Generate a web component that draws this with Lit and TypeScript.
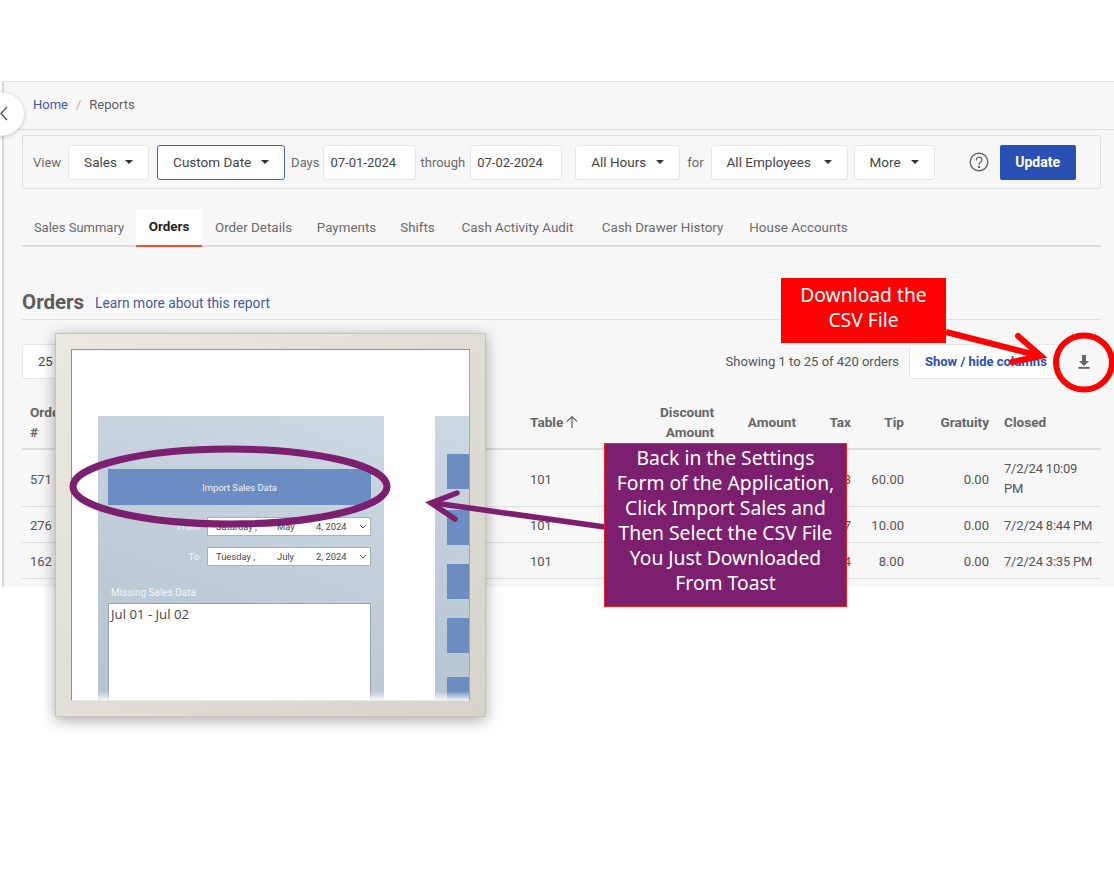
import { LitElement, html, css, svg } from 'lit';
import { customElement } from 'lit/decorators.js';

const caret = html`<span class="caret"></span>`;

const TABS = [
  { label: 'Sales Summary', width: 114 },
  { label: 'Orders', width: 66 },
  { label: 'Order Details', width: 103 },
  { label: 'Payments', width: 83 },
  { label: 'Shifts', width: 59 },
  { label: 'Cash Activity Audit', width: 141 },
  { label: 'Cash Drawer History', width: 149 },
  { label: 'House Accounts', width: 123 },
];

const ROWS = [
  { id: '571', table: '101', tax: '7.83', tip: '60.00', grat: '0.00', closed: '7/2/24 10:09 PM', tall: true },
  { id: '276', table: '101', tax: '2.67', tip: '10.00', grat: '0.00', closed: '7/2/24 8:44 PM', tall: false },
  { id: '162', table: '101', tax: '2.14', tip: '8.00', grat: '0.00', closed: '7/2/24 3:35 PM', tall: false },
];

@customElement('app-root')
export class AppRoot extends LitElement {
  static styles = css`
    :host {
      display: block;
      position: relative;
      width: 1114px;
      height: 883px;
      overflow: hidden;
      background: #fff;
      font-family: Roboto, 'Liberation Sans', sans-serif;
      font-size: 13px;
      color: #5e5e5e;
    }
    .page {
      margin: 81px 0 0 2px;
      height: 506px;
      box-sizing: border-box;
      background: #f7f7f7;
      border-top: 1px solid #e0e0e0;
      border-left: 2px solid #d9d9d9;
      padding-left: 18px;
      padding-right: 13px;
    }
    .crumbs {
      height: 48px;
      margin: 0 -13px 5px -18px;
      padding: 0 0 2px 29px;
      border-bottom: 1px solid #dcdcdc;
      display: flex;
      align-items: center;
      gap: 8px;
      box-sizing: border-box;
    }
    .crumbs a { color: #4256a8; }
    .crumbs .sep { color: #b5b5b5; }
    .filters {
      height: 54px;
      box-sizing: border-box;
      border: 1px solid #dedede;
      border-radius: 2px;
      display: flex;
      align-items: center;
      padding-left: 10px;
    }
    .sel, .date {
      height: 35px;
      box-sizing: border-box;
      background: #fff;
      border: 1px solid #e6e6e6;
      border-radius: 3px;
      display: flex;
      align-items: center;
      color: #444;
    }
    .sel { justify-content: space-between; padding: 0 15px; font-size: 13.5px; }
    .date { padding-left: 6px; }
    .sel.focus { border-color: #4a62b0; }
    .caret {
      width: 0;
      height: 0;
      border-left: 4px solid transparent;
      border-right: 4px solid transparent;
      border-top: 4px solid #333;
    }
    .lbl { color: #6b6b6b; }
    .help {
      width: 20px;
      height: 20px;
      display: block;
      margin-left: 34px;
      margin-right: 11px;
    }
    .update {
      width: 76px;
      height: 35px;
      background: #2a4fb5;
      color: #fff;
      font-weight: 700;
      font-size: 14px;
      border-radius: 2px;
      display: flex;
      align-items: center;
      justify-content: center;
    }
    .tabs {
      margin-top: 20px;
      height: 38px;
      box-sizing: border-box;
      border-bottom: 2px solid #dcdcdc;
      display: flex;
    }
    .tab {
      display: flex;
      align-items: center;
      justify-content: center;
      box-sizing: border-box;
      height: 36px;
      font-size: 13.4px;
      color: #6b6b6b;
    }
    .tab:first-child { font-size: 13px; }
    .tab.on {
      height: 38px;
      padding-bottom: 2px;
      background: #fff;
      color: #222;
      font-weight: 700;
      border-bottom: 2px solid #f0532a;
    }
    .title {
      margin-top: 40px;
      height: 33px;
      border-bottom: 1px solid #dedede;
      display: flex;
      align-items: center;
      gap: 11px;
      box-sizing: border-box;
      padding-bottom: 2px;
    }
    .title h2 {
      margin: 0;
      font-size: 20.5px;
      font-weight: 700;
      color: #5c5c5c;
    }
    .title a {
      color: #4256a8;
      background: #fff;
      border-radius: 9px;
      font-size: 13.8px;
      padding: 1px 0;
      margin-top: 2px;
    }
    .tools {
      margin-top: 24px;
      height: 35px;
      display: flex;
      align-items: center;
    }
    .size {
      width: 80px;
      height: 35px;
      box-sizing: border-box;
      background: #fff;
      border: 1px solid #e6e6e6;
      border-radius: 3px;
      display: flex;
      align-items: center;
      padding-left: 15px;
      color: #444;
    }
    .count { margin-left: auto; color: #555; }
    .cols {
      margin-left: 10px;
      width: 151px;
      height: 35px;
      box-sizing: border-box;
      background: #fff;
      border: 1px solid #e6e6e6;
      border-radius: 3px;
      padding-left: 15px;
      display: flex;
      align-items: center;
      color: #2a4fb5;
      font-weight: 700;
    }
    .dl { width: 16px; height: 16px; margin: 0 9px 0 16px; display: block; }
    .row {
      display: grid;
      grid-template-columns: 500px 130px 70px 82px 55px 53px 85px 104px;
      align-items: center;
      box-sizing: border-box;
      border-bottom: 1px solid #dedede;
      color: #555;
    }
    .row > div { padding: 2px 8px 0; box-sizing: border-box; }
    .row .r { text-align: right; }
    .row .c { padding-left: 7px; padding-right: 8px; line-height: 20px; letter-spacing: -0.2px; }
    .row.head {
      margin-top: 17px;
      height: 54px;
      border-bottom: 2px solid #dcdcdc;
      font-weight: 700;
      font-size: 13.6px;
      color: #666;
      line-height: 20px;
    }
    .row.head > div { padding-top: 0; }
    .row.head .c { letter-spacing: 0; }
    .row.head .tb { display: flex; align-items: center; gap: 2px; }
    .row.tall { height: 57px; }
    .row.low { height: 36px; }

    .frame {
      position: absolute;
      left: 55px;
      top: 333px;
      width: 431px;
      height: 384px;
      box-sizing: border-box;
      padding: 15px;
      background: linear-gradient(135deg, #ebe8e1, #d6d3cb);
      border: 1px solid #c6c3bb;
      box-shadow: 0 3px 14px rgba(0, 0, 0, 0.35);
    }
    .shot {
      position: relative;
      height: 100%;
      box-sizing: border-box;
      background: #fff;
      border: 1px solid #8f8f8f;
      border-bottom-color: #e8e8e8;
      border-right-color: #a8a8a8;
      overflow: hidden;
      padding: 66px 0 0 26px;
      display: flex;
      gap: 51px;
    }
    .shot::after {
      content: '';
      position: absolute;
      left: 0;
      right: 0;
      bottom: 0;
      height: 9px;
      background: linear-gradient(to bottom, rgba(255, 255, 255, 0), rgba(255, 255, 255, 0.85));
    }
    .panel {
      width: 286px;
      flex: none;
      background: linear-gradient(200deg, #ccd8e2, #b6c4d1);
      padding: 53px 13px 0 10px;
      box-sizing: border-box;
      font-size: 9.4px;
      color: #f2f5f8;
    }
    .import {
      height: 36px;
      background: #6c8dc2;
      display: flex;
      align-items: center;
      justify-content: center;
      color: #eef2f8;
      margin-bottom: 12px;
    }
    .pick {
      display: flex;
      align-items: center;
      justify-content: flex-end;
      gap: 8px;
      margin-bottom: 11px;
    }
    .combo {
      width: 164px;
      height: 19px;
      box-sizing: border-box;
      background: #fff;
      border: 1px solid #a5b0bb;
      color: #444;
      display: grid;
      grid-template-columns: 61px 39px 43px 10px;
      align-items: center;
      padding-left: 8px;
    }
    .combo svg { display: block; }
    .missing { margin: 19px 0 0 3px; height: 18px; line-height: 16px; font-size: 10px; }
    .list {
      height: 120px;
      background: #fff;
      border: 1px solid #95a3b0;
      border-bottom: none;
      padding: 1px 2px;
      font-family: 'Open Sans', sans-serif;
      font-size: 13.2px;
      color: #444;
    }
    .side {
      flex: 1;
      background: linear-gradient(200deg, #ccd8e2, #b6c4d1);
      padding: 38px 0 0 12px;
      display: flex;
      flex-direction: column;
      gap: 19px;
    }
    .side i { display: block; height: 35px; background: #6c8dc2; flex: none; }
    .side i:first-child { margin-bottom: 2px; }
    .side i:last-child { margin-top: 5px; }

    .overlay { position: absolute; left: 0; top: 0; pointer-events: none; }
    .callout {
      position: absolute;
      box-sizing: border-box;
      color: #fff;
      font-family: 'Noto Sans', sans-serif;
      text-align: center;
      display: flex;
      align-items: center;
      justify-content: center;
    }
    .callout.red {
      left: 781px;
      top: 278px;
      width: 165px;
      height: 65px;
      padding-bottom: 8px;
      background: #ff0000;
      font-size: 19.3px;
      line-height: 25px;
    }
    .callout.purple {
      left: 604px;
      top: 443px;
      width: 243px;
      height: 164px;
      padding-bottom: 10px;
      background: #7b1f6e;
      border: 1px solid #ff1a1a;
      font-size: 19.3px;
      line-height: 25px;
    }
    .back {
      position: absolute;
      left: -24px;
      top: 92px;
      width: 48px;
      height: 44px;
      border-radius: 50%;
      background: #fff;
      box-shadow: 0 1px 5px rgba(0, 0, 0, 0.2);
    }
    .chev { position: absolute; left: 0; top: 106px; width: 8px; height: 15px; display: block; }
  `;

  private renderRow(r: (typeof ROWS)[number]) {
    return html`
      <div class="row ${r.tall ? 'tall' : 'low'}">
        <div>${r.id}</div>
        <div>${r.table}</div>
        <div></div>
        <div></div>
        <div class="r">${r.tax}</div>
        <div class="r">${r.tip}</div>
        <div class="r">${r.grat}</div>
        <div class="c">${r.closed}</div>
      </div>
    `;
  }

  private renderOverlay() {
    return svg`
      <ellipse cx="230" cy="486.5" rx="157" ry="37.5" fill="none" stroke="#7b1f6e" stroke-width="7" />
      <g fill="none" stroke="#7b1f6e" stroke-width="5.5" stroke-linecap="round">
        <line x1="605" y1="527" x2="434" y2="503" stroke-linecap="butt" />
        <polyline points="457,493 431,503 455,519" />
      </g>
      <g fill="none" stroke="#ff0000" stroke-width="6" stroke-linecap="round">
        <line x1="946" y1="332" x2="1036" y2="355" stroke-linecap="butt" />
        <polyline points="1018,336 1041,356 1012,362" />
      </g>
      <ellipse cx="1084" cy="362.5" rx="28" ry="27" fill="none" stroke="#ff0000" stroke-width="6" />
    `;
  }

  render() {
    return html`
      <div class="page">
        <div class="crumbs">
          <a>Home</a><span class="sep">/</span><span>Reports</span>
        </div>
        <div class="filters">
          <span class="lbl">View</span>
          <div class="sel" style="width:81px;margin-left:7px">Sales ${caret}</div>
          <div class="sel focus" style="width:128px;margin-left:8px">Custom Date ${caret}</div>
          <span class="lbl" style="margin-left:6px">Days</span>
          <div class="date" style="width:93px;margin-left:4px">07-01-2024</div>
          <span class="lbl" style="margin-left:4px">through</span>
          <div class="date" style="width:92px;margin-left:5px">07-02-2024</div>
          <div class="sel" style="width:105px;margin-left:13px">All Hours ${caret}</div>
          <span class="lbl" style="margin-left:7px">for</span>
          <div class="sel" style="width:137px;margin-left:7px">All Employees ${caret}</div>
          <div class="sel" style="width:81px;margin-left:6px">More ${caret}</div>
          <svg class="help" viewBox="0 0 20 20" fill="none" stroke="#666" stroke-width="1.4">
            <circle cx="10" cy="10" r="8.8" />
            <path d="M7.4 7.8a2.7 2.7 0 1 1 4.3 2.2c-1 .7-1.7 1.2-1.7 2.4" stroke-linecap="round" />
            <circle cx="10" cy="14.9" r=".5" fill="#666" />
          </svg>
          <div class="update">Update</div>
        </div>
        <div class="tabs">
          ${TABS.map(
            (t) => html`<div class="tab ${t.label === 'Orders' ? 'on' : ''}" style="width:${t.width}px">${t.label}</div>`,
          )}
        </div>
        <div class="title">
          <h2>Orders</h2>
          <a>Learn more about this report</a>
        </div>
        <div class="tools">
          <div class="size">25</div>
          <span class="count">Showing 1 to 25 of 420 orders</span>
          <div class="cols">Show / hide columns</div>
          <svg class="dl" viewBox="0 0 16 16" fill="#666">
            <path d="M6 1h4v6h3l-5 5-5-5h3z" />
            <rect x="2.5" y="13" width="11" height="1.8" />
          </svg>
        </div>
        <div class="row head">
          <div>Order<br />#</div>
          <div class="tb">
            Table
            <svg width="14" height="14" viewBox="0 0 14 14" fill="none" stroke="#666" stroke-width="1.2">
              <path d="M7 13V1.5M2 6.5l5-5 5 5" />
            </svg>
          </div>
          <div class="r">Discount<br />Amount</div>
          <div class="r">Amount</div>
          <div class="r">Tax</div>
          <div class="r">Tip</div>
          <div class="r">Gratuity</div>
          <div class="c">Closed</div>
        </div>
        ${ROWS.map((r) => this.renderRow(r))}
      </div>

      <div class="back"></div>
      <svg class="chev" viewBox="0 0 8 15" fill="none" stroke="#555" stroke-width="1.4">
        <path d="M7 1L1 7.5 7 14" />
      </svg>

      <div class="frame">
        <div class="shot">
          <div class="panel">
            <div class="import">Import Sales Data</div>
            <div class="pick">
              <span>From</span>
              <div class="combo">
                <span>Saturday ,</span><span>May</span><span>4, 2024</span>
                <svg width="8" height="5" viewBox="0 0 8 5" fill="none" stroke="#666"><path d="M1 1l3 3 3-3" /></svg>
              </div>
            </div>
            <div class="pick">
              <span>To</span>
              <div class="combo">
                <span>Tuesday ,</span><span>July</span><span>2, 2024</span>
                <svg width="8" height="5" viewBox="0 0 8 5" fill="none" stroke="#666"><path d="M1 1l3 3 3-3" /></svg>
              </div>
            </div>
            <div class="missing">Missing Sales Data</div>
            <div class="list">Jul 01 - Jul 02</div>
          </div>
          <div class="side"><i></i><i></i><i></i><i></i><i></i></div>
        </div>
      </div>

      <svg class="overlay" width="1114" height="883" viewBox="0 0 1114 883">
        ${this.renderOverlay()}
      </svg>

      <div class="callout red">Download the<br />CSV File</div>
      <div class="callout purple">
        <div>
          Back in the Settings<br />Form of the Application,<br />Click Import Sales and<br />
          Then Select the CSV File<br />You Just Downloaded<br />From Toast
        </div>
      </div>
    `;
  }
}

declare global {
  interface HTMLElementTagNameMap {
    'app-root': AppRoot;
  }
}
